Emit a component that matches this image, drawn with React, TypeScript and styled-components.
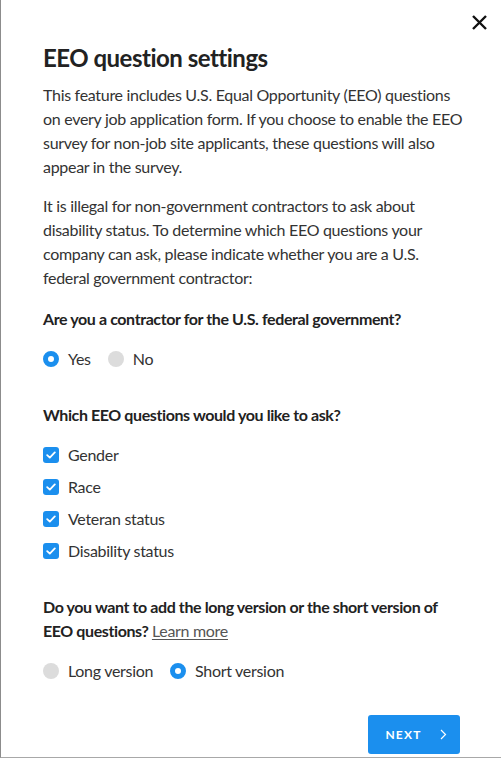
import React, { useState } from 'react';
import styled, { createGlobalStyle } from 'styled-components';

const GlobalStyle = createGlobalStyle`
  body {
    margin: 0;
    background: #ffffff;
    font-family: Lato, "Open Sans", sans-serif;
  }
`;

const Modal = styled.div`
  position: relative;
  box-sizing: border-box;
  width: 501px;
  height: 758px;
  padding: 42px 35px 0 42px;
  background: #ffffff;
  border-left: 1px solid #8c8c8c;
  border-bottom: 1px solid #a8a8a8;
  color: #333333;
  letter-spacing: -0.3px;
`;

const Close = styled.button`
  position: absolute;
  top: 13px;
  right: 13px;
  width: 18px;
  height: 18px;
  padding: 0;
  border: none;
  background: none;
  display: flex;
  align-items: center;
  justify-content: center;
`;

const Title = styled.h1`
  margin: 0 0 9px;
  font-size: 24px;
  line-height: 32px;
  font-weight: 700;
  letter-spacing: -0.5px;
  color: #222222;
`;

const Para = styled.p`
  margin: 0 0 15px;
  font-size: 16px;
  line-height: 24px;
`;

const Section = styled.div<{ $top: number }>`
  margin-top: ${(p) => p.$top}px;
`;

const Question = styled.div`
  font-size: 16px;
  line-height: 24px;
  font-weight: 700;
  letter-spacing: -0.4px;
  color: #222222;
`;

const LearnMore = styled.a`
  font-weight: 400;
  letter-spacing: -0.3px;
  color: #555555;
  text-decoration: underline;
  text-underline-offset: 2px;
`;

const RadioGroup = styled.div`
  margin-top: 16px;
  display: flex;
  gap: 17px;
`;

const Option = styled.label`
  display: flex;
  align-items: center;
  gap: 9px;
  font-size: 16px;
  line-height: 24px;
  color: #333333;
`;

const RadioDot = styled.span<{ $on: boolean }>`
  box-sizing: border-box;
  width: 16px;
  height: 16px;
  border-radius: 50%;
  background: ${(p) => (p.$on ? '#ffffff' : '#dcdcdc')};
  border: ${(p) => (p.$on ? '5px solid #1b8fee' : 'none')};
`;

const CheckList = styled.div`
  margin-top: 16px;
  display: flex;
  flex-direction: column;
  gap: 8px;
`;

const Box = styled.span`
  width: 16px;
  height: 16px;
  border-radius: 3px;
  background: #1b8fee;
  display: flex;
  align-items: center;
  justify-content: center;
`;

const Footer = styled.div`
  margin-top: 32px;
  display: flex;
  justify-content: flex-end;
  padding-right: 6px;
`;

const NextButton = styled.button`
  width: 92px;
  height: 39px;
  border: none;
  border-radius: 3px;
  background: #1b8fee;
  color: #ffffff;
  font-family: Lato, sans-serif;
  font-size: 12px;
  font-weight: 700;
  letter-spacing: 1.2px;
  display: flex;
  align-items: center;
  justify-content: center;
  gap: 18px;
  padding: 0 0 0 4px;
`;

const Radio = ({ label, on }: { label: string; on: boolean }) => (
  <Option>
    <RadioDot $on={on} />
    {label}
  </Option>
);

const Check = ({ label }: { label: string }) => (
  <Option>
    <Box>
      <svg width="10" height="8" viewBox="0 0 10 8">
        <path d="M1.2 4.2 L3.8 6.6 L8.8 1.4" fill="none" stroke="#fff" strokeWidth="1.8" strokeLinecap="round" strokeLinejoin="round" />
      </svg>
    </Box>
    {label}
  </Option>
);

export default function App() {
  const [contractor] = useState(true);
  const [short] = useState(true);
  return (
    <>
      <GlobalStyle />
      <Modal>
        <Close aria-label="Close">
          <svg width="15" height="15" viewBox="0 0 15 15">
            <path d="M1 1 L14 14 M14 1 L1 14" stroke="#111" strokeWidth="2.4" />
          </svg>
        </Close>
        <Title>EEO question settings</Title>
        <Para>
          This feature includes U.S. Equal Opportunity (EEO) questions on every job application form. If you
          choose to enable the EEO survey for non-job site applicants, these questions will also appear in the
          survey.
        </Para>
        <Para>
          It is illegal for non-government contractors to ask about disability status. To determine which EEO
          questions your company can ask, please indicate whether you are a U.S. federal government contractor:
        </Para>
        <Section $top={17}>
          <Question>Are you a contractor for the U.S. federal government?</Question>
          <RadioGroup>
            <Radio label="Yes" on={contractor} />
            <Radio label="No" on={!contractor} />
          </RadioGroup>
        </Section>
        <Section $top={32}>
          <Question>Which EEO questions would you like to ask?</Question>
          <CheckList>
            <Check label="Gender" />
            <Check label="Race" />
            <Check label="Veteran status" />
            <Check label="Disability status" />
          </CheckList>
        </Section>
        <Section $top={32}>
          <Question>
            Do you want to add the long version or the short version of EEO questions?{' '}
            <LearnMore>Learn more</LearnMore>
          </Question>
          <RadioGroup>
            <Radio label="Long version" on={!short} />
            <Radio label="Short version" on={short} />
          </RadioGroup>
        </Section>
        <Footer>
          <NextButton>
            NEXT
            <svg width="7" height="11" viewBox="0 0 7 11">
              <path d="M1 1 L5.5 5.5 L1 10" fill="none" stroke="#fff" strokeWidth="1.2" />
            </svg>
          </NextButton>
        </Footer>
      </Modal>
    </>
  );
}
